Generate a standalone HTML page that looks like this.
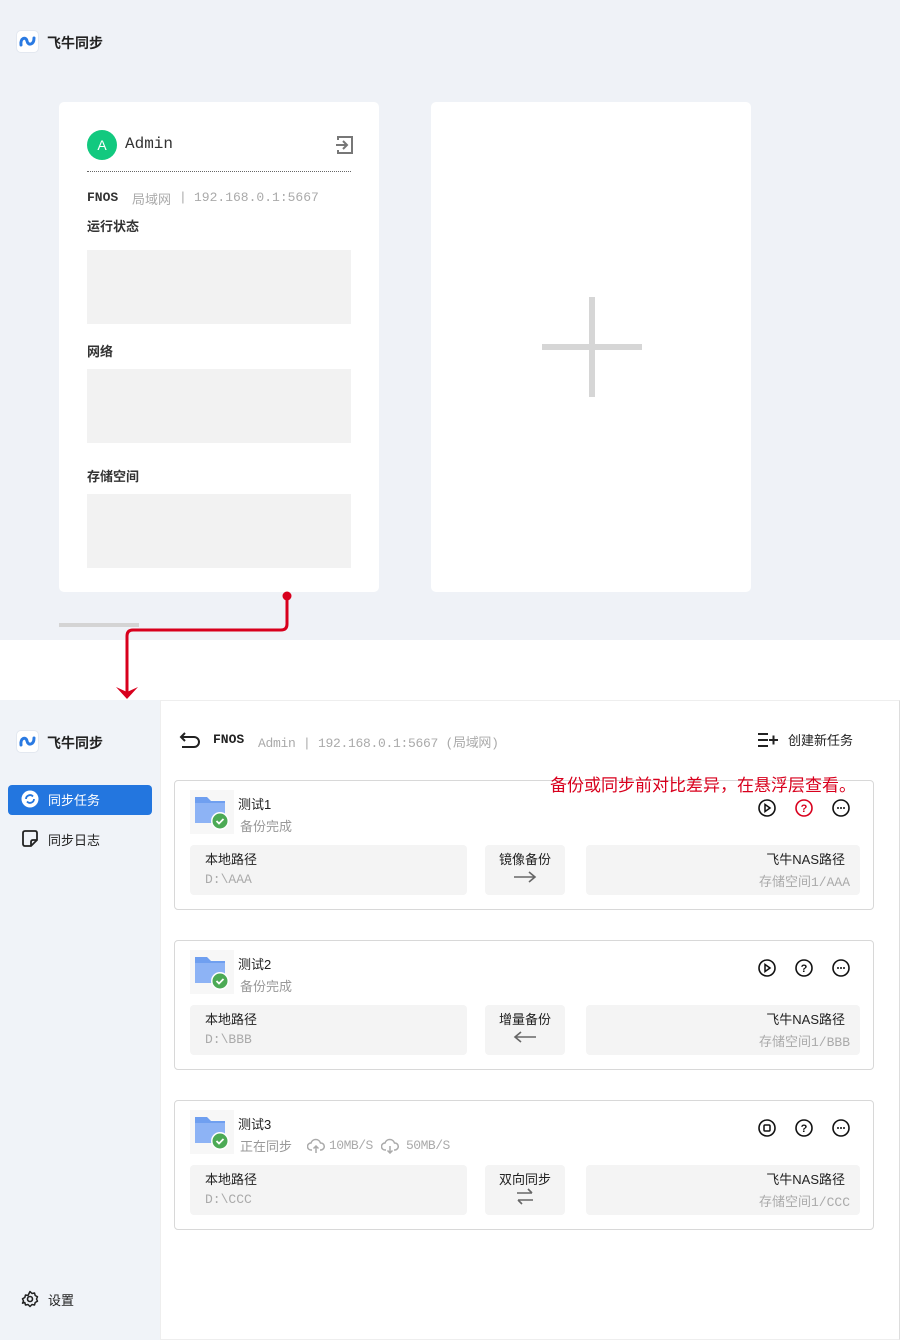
<!DOCTYPE html>
<html><head><meta charset="utf-8"><style>
*{margin:0;padding:0;box-sizing:border-box}
body{width:900px;height:1340px;position:relative;background:#fff;font-family:"Liberation Sans","Noto Sans CJK SC",sans-serif;color:#222;overflow:hidden}
.a{position:absolute}
.mono{font-family:"Liberation Mono","Noto Sans CJK SC",monospace}
.gbox{background:#f2f2f2;position:absolute;left:87px;width:264px;height:74px}
.lbl{position:absolute;left:87px;font-size:13px;font-weight:bold;color:#333}
.card{position:absolute;left:174px;width:700px;height:130px;border:1px solid #d8d8d8;border-radius:4px;background:#fff}
.box{position:absolute;top:64px;height:50px;background:#f4f4f4;border-radius:4px;font-size:13px}
.ic{position:absolute;top:18px}
</style></head><body>
<div class="a" style="left:0;top:0;width:900px;height:640px;background:#eff2f7"></div>
<div class="a" style="left:16px;top:30px;width:23px;height:23px;background:#fff;border-radius:5px;border:1px solid #e3e8f0"></div>
<svg class="a" style="left:18px;top:33px" width="19" height="17" viewBox="0 0 19 17"><path d="M3 12 C2 5,8 3,9 8 C10 13,16 12,16 5" fill="none" stroke="#2a7ae2" stroke-width="3" stroke-linecap="round"/></svg>
<div class="a" style="left:47px;top:33px;font-size:14px;font-weight:bold">飞牛同步</div>
<div class="a" style="left:59px;top:102px;width:320px;height:490px;background:#fff;border-radius:5px"></div>
<div class="a" style="left:87px;top:130px;width:30px;height:30px;border-radius:50%;background:#12c97f;color:#fff;font-size:14px;text-align:center;line-height:30px">A</div>
<div class="a mono" style="left:125px;top:135px;font-size:16px;color:#333">Admin</div>
<svg class="a" style="left:335px;top:134px" width="20" height="22" viewBox="0 0 20 22"><path d="M3 6V3h14v16H3v-3M1 11h10M8 7l4 4-4 4" fill="none" stroke="#777" stroke-width="2"/></svg>
<div class="a" style="left:87px;top:171px;width:264px;border-top:1px dotted #666"></div>
<div class="a mono" style="left:87px;top:190px;font-size:13px;font-weight:bold;color:#333">FNOS</div>
<div class="a" style="left:132px;top:189px;font-size:13px;color:#aaa">局域网</div>
<div class="a mono" style="left:179px;top:190px;font-size:13px;color:#aaa">|</div>
<div class="a mono" style="left:194px;top:190px;font-size:13px;color:#aaa">192.168.0.1:5667</div>
<div class="lbl" style="top:216px">运行状态</div>
<div class="gbox" style="top:250px"></div>
<div class="lbl" style="top:341px">网络</div>
<div class="gbox" style="top:369px"></div>
<div class="lbl" style="top:466px">存储空间</div>
<div class="gbox" style="top:494px"></div>
<div class="a" style="left:59px;top:623px;width:80px;height:4px;background:#d4d4d4"></div>
<div class="a" style="left:431px;top:102px;width:320px;height:490px;background:#fff;border-radius:5px"></div>
<div class="a" style="left:589px;top:297px;width:6px;height:100px;background:#d6d6d6"></div>
<div class="a" style="left:542px;top:344px;width:100px;height:6px;background:#d6d6d6"></div>
<svg class="a" style="left:0;top:580px" width="320" height="125" viewBox="0 580 320 125"><circle cx="287" cy="596" r="4.5" fill="#d8001d"/><path d="M287 596V624q0 6-6 6H133q-6 0-6 6V695" fill="none" stroke="#d8001d" stroke-width="3"/><path d="M116 687l11 12 11-12-11 5z" fill="#d8001d"/></svg>
<div class="a" style="left:0;top:700px;width:160px;height:640px;background:#f0f3f8"></div>
<div class="a" style="left:160px;top:700px;width:740px;height:640px;border:1px solid #eee;border-right:1px solid #ddd"></div>
<div class="a" style="left:16px;top:730px;width:23px;height:23px;background:#fff;border-radius:5px;border:1px solid #e3e8f0"></div>
<svg class="a" style="left:18px;top:733px" width="19" height="17" viewBox="0 0 19 17"><path d="M3 12 C2 5,8 3,9 8 C10 13,16 12,16 5" fill="none" stroke="#2a7ae2" stroke-width="3" stroke-linecap="round"/></svg>
<div class="a" style="left:47px;top:733px;font-size:14px;font-weight:bold">飞牛同步</div>
<div class="a" style="left:8px;top:785px;width:144px;height:30px;background:#2376df;border-radius:4px"></div>
<svg class="a" style="left:21px;top:790px" width="18" height="18" viewBox="0 0 18 18"><circle cx="9" cy="9" r="8.5" fill="#fff"/><path d="M5 9a4 4 0 0 1 7-2.5M13 9a4 4 0 0 1-7 2.5" fill="none" stroke="#2376df" stroke-width="1.8"/></svg>
<div class="a" style="left:48px;top:790px;font-size:13px;color:#fff">同步任务</div>
<svg class="a" style="left:21px;top:830px" width="18" height="18" viewBox="0 0 18 18"><path d="M2 3q0-2 2-2h10q2 0 2 2v7l-6 6H4q-2 0-2-2z M16 10h-4q-2 0-2 2v4" fill="none" stroke="#222" stroke-width="1.8"/></svg>
<div class="a" style="left:48px;top:830px;font-size:13px">同步日志</div>
<svg class="a" style="left:21px;top:1290px" width="18" height="18" viewBox="0 0 18 18"><circle cx="9" cy="9" r="2.5" fill="none" stroke="#222" stroke-width="1.6"/><path d="M9 1.5l2 2 2.5-.5.7 2.5 2.3 1.3-1 2.2 1 2.2-2.3 1.3-.7 2.5-2.5-.5-2 2-2-2-2.5.5-.7-2.5L1.5 13.2l1-2.2-1-2.2 2.3-1.3.7-2.5 2.5.5z" fill="none" stroke="#222" stroke-width="1.5" stroke-linejoin="round"/></svg>
<div class="a" style="left:48px;top:1290px;font-size:13px">设置</div>
<svg class="a" style="left:179px;top:732px" width="22" height="16" viewBox="0 0 22 16"><path d="M6 1L2 5l4 4M2 5h13a5 5 0 0 1 0 10H3" fill="none" stroke="#222" stroke-width="2"/></svg>
<div class="a mono" style="left:213px;top:732px;font-size:13px;font-weight:bold">FNOS</div>
<div class="a mono" style="left:258px;top:732px;font-size:13px;color:#aaa;letter-spacing:-0.3px">Admin | 192.168.0.1:5667 (局域网)</div>
<svg class="a" style="left:757px;top:733px" width="22" height="14" viewBox="0 0 22 14"><path d="M1 1h10M1 7h10M1 13h10M12 7h9M16.5 2.5v9" stroke="#222" stroke-width="2"/></svg>
<div class="a" style="left:788px;top:730px;font-size:13px">创建新任务</div>

<div class="card" style="top:780px"></div>
<div class="card" style="top:940px"></div>
<div class="card" style="top:1100px"></div>

<div class="a" style="left:550px;top:771px;font-size:17px;color:#d8001d">备份或同步前对比差异，在悬浮层查看。</div>

<div class="a" style="left:174px;top:780px;width:700px;height:130px">
 <div class="a" style="left:16px;top:10px;width:44px;height:44px;background:#f7f7f7"></div>
 <svg class="a" style="left:20px;top:14px" width="40" height="38" viewBox="0 0 40 38"><path d="M1 3h12l4 4h14v22H1z" fill="#6f9ff0"/><path d="M1 9h30v20H1z" fill="#8db3f5"/><circle cx="26" cy="27" r="9" fill="#fff"/><circle cx="26" cy="27" r="7.5" fill="#4caa55"/><path d="M22.5 27l2.5 2.5 4.5-4.5" fill="none" stroke="#fff" stroke-width="1.8"/></svg>
 <div class="a" style="left:64px;top:14px;font-size:13px">测试1</div>
 <div class="a" style="left:66px;top:36px;font-size:13px;color:#999">备份完成</div>
 <svg class="ic" style="left:584px;top:19px" width="18" height="18" viewBox="0 0 18 18"><circle cx="9" cy="9" r="8" fill="none" stroke="#111" stroke-width="1.6"/><path d="M7 5.5v7l5-3.5z" fill="none" stroke="#111" stroke-width="1.5"/></svg>
 <svg class="ic" style="left:621px;top:19px" width="18" height="18" viewBox="0 0 18 18"><circle cx="9" cy="9" r="8" fill="none" stroke="#d8001d" stroke-width="1.6"/><text x="9" y="13" font-size="11" font-weight="bold" text-anchor="middle" fill="#d8001d" font-family="Liberation Sans">?</text></svg>
 <svg class="ic" style="left:658px;top:19px" width="18" height="18" viewBox="0 0 18 18"><circle cx="9" cy="9" r="8" fill="none" stroke="#111" stroke-width="1.6"/><circle cx="6" cy="9" r="1" fill="#111"/><circle cx="9" cy="9" r="1" fill="#111"/><circle cx="12" cy="9" r="1" fill="#111"/></svg>
 <div class="box" style="left:16px;top:65px;width:277px"><div class="a" style="left:15px;top:4px">本地路径</div><div class="a mono" style="left:15px;top:27px;color:#aaa">D:\AAA</div></div>
 <div class="box" style="left:311px;top:65px;width:80px;text-align:center"><div style="margin-top:4px">镜像备份</div><svg width="24" height="18" viewBox="0 0 24 18"><path d="M1 9h21M16 4l6 5-6 5" fill="none" stroke="#666" stroke-width="1.6"/></svg></div>
 <div class="box" style="left:412px;top:65px;width:274px;text-align:right;padding-right:15px"><div style="margin-top:4px">飞牛NAS路径</div><div class="mono" style="color:#aaa;margin-top:3px;margin-right:-5px">存储空间1/AAA</div></div>
</div>

<div class="a" style="left:174px;top:940px;width:700px;height:130px">
 <div class="a" style="left:16px;top:10px;width:44px;height:44px;background:#f7f7f7"></div>
 <svg class="a" style="left:20px;top:14px" width="40" height="38" viewBox="0 0 40 38"><path d="M1 3h12l4 4h14v22H1z" fill="#6f9ff0"/><path d="M1 9h30v20H1z" fill="#8db3f5"/><circle cx="26" cy="27" r="9" fill="#fff"/><circle cx="26" cy="27" r="7.5" fill="#4caa55"/><path d="M22.5 27l2.5 2.5 4.5-4.5" fill="none" stroke="#fff" stroke-width="1.8"/></svg>
 <div class="a" style="left:64px;top:14px;font-size:13px">测试2</div>
 <div class="a" style="left:66px;top:36px;font-size:13px;color:#999">备份完成</div>
 <svg class="ic" style="left:584px;top:19px" width="18" height="18" viewBox="0 0 18 18"><circle cx="9" cy="9" r="8" fill="none" stroke="#111" stroke-width="1.6"/><path d="M7 5.5v7l5-3.5z" fill="none" stroke="#111" stroke-width="1.5"/></svg>
 <svg class="ic" style="left:621px;top:19px" width="18" height="18" viewBox="0 0 18 18"><circle cx="9" cy="9" r="8" fill="none" stroke="#111" stroke-width="1.6"/><text x="9" y="13" font-size="11" font-weight="bold" text-anchor="middle" fill="#111" font-family="Liberation Sans">?</text></svg>
 <svg class="ic" style="left:658px;top:19px" width="18" height="18" viewBox="0 0 18 18"><circle cx="9" cy="9" r="8" fill="none" stroke="#111" stroke-width="1.6"/><circle cx="6" cy="9" r="1" fill="#111"/><circle cx="9" cy="9" r="1" fill="#111"/><circle cx="12" cy="9" r="1" fill="#111"/></svg>
 <div class="box" style="left:16px;top:65px;width:277px"><div class="a" style="left:15px;top:4px">本地路径</div><div class="a mono" style="left:15px;top:27px;color:#aaa">D:\BBB</div></div>
 <div class="box" style="left:311px;top:65px;width:80px;text-align:center"><div style="margin-top:4px">增量备份</div><svg width="24" height="18" viewBox="0 0 24 18"><path d="M23 9H2M8 4L2 9l6 5" fill="none" stroke="#666" stroke-width="1.6"/></svg></div>
 <div class="box" style="left:412px;top:65px;width:274px;text-align:right;padding-right:15px"><div style="margin-top:4px">飞牛NAS路径</div><div class="mono" style="color:#aaa;margin-top:3px;margin-right:-5px">存储空间1/BBB</div></div>
</div>

<div class="a" style="left:174px;top:1100px;width:700px;height:130px">
 <div class="a" style="left:16px;top:10px;width:44px;height:44px;background:#f7f7f7"></div>
 <svg class="a" style="left:20px;top:14px" width="40" height="38" viewBox="0 0 40 38"><path d="M1 3h12l4 4h14v22H1z" fill="#6f9ff0"/><path d="M1 9h30v20H1z" fill="#8db3f5"/><circle cx="26" cy="27" r="9" fill="#fff"/><circle cx="26" cy="27" r="7.5" fill="#4caa55"/><path d="M22.5 27l2.5 2.5 4.5-4.5" fill="none" stroke="#fff" stroke-width="1.8"/></svg>
 <div class="a" style="left:64px;top:14px;font-size:13px">测试3</div>
 <div class="a" style="left:66px;top:36px;font-size:13px;color:#999">正在同步</div>
 <svg class="a" style="left:133px;top:38px" width="18" height="16" viewBox="0 0 18 16"><path d="M5 12H4a3.5 3.5 0 0 1 0-7 5 5 0 0 1 9.5 0A3.5 3.5 0 0 1 14 12h-1M9 15V8M6.5 10.5L9 8l2.5 2.5" fill="none" stroke="#aaa" stroke-width="1.5"/></svg>
 <div class="a mono" style="left:155px;top:38px;font-size:13px;color:#aaa;letter-spacing:-0.5px">10MB/S</div>
 <svg class="a" style="left:207px;top:38px" width="18" height="16" viewBox="0 0 18 16"><path d="M5 12H4a3.5 3.5 0 0 1 0-7 5 5 0 0 1 9.5 0A3.5 3.5 0 0 1 14 12h-1M9 8v7M6.5 12.5L9 15l2.5-2.5" fill="none" stroke="#aaa" stroke-width="1.5"/></svg>
 <div class="a mono" style="left:232px;top:38px;font-size:13px;color:#aaa;letter-spacing:-0.5px">50MB/S</div>
 <svg class="ic" style="left:584px;top:19px" width="18" height="18" viewBox="0 0 18 18"><circle cx="9" cy="9" r="8" fill="none" stroke="#111" stroke-width="1.6"/><rect x="6" y="6" width="6" height="6" rx="1" fill="none" stroke="#111" stroke-width="1.5"/></svg>
 <svg class="ic" style="left:621px;top:19px" width="18" height="18" viewBox="0 0 18 18"><circle cx="9" cy="9" r="8" fill="none" stroke="#111" stroke-width="1.6"/><text x="9" y="13" font-size="11" font-weight="bold" text-anchor="middle" fill="#111" font-family="Liberation Sans">?</text></svg>
 <svg class="ic" style="left:658px;top:19px" width="18" height="18" viewBox="0 0 18 18"><circle cx="9" cy="9" r="8" fill="none" stroke="#111" stroke-width="1.6"/><circle cx="6" cy="9" r="1" fill="#111"/><circle cx="9" cy="9" r="1" fill="#111"/><circle cx="12" cy="9" r="1" fill="#111"/></svg>
 <div class="box" style="left:16px;top:65px;width:277px"><div class="a" style="left:15px;top:4px">本地路径</div><div class="a mono" style="left:15px;top:27px;color:#aaa">D:\CCC</div></div>
 <div class="box" style="left:311px;top:65px;width:80px;text-align:center"><div style="margin-top:4px">双向同步</div><svg width="20" height="18" viewBox="0 0 20 18"><path d="M2 5h15M13 1l4 4M18 12H3M7 16l-4-4" fill="none" stroke="#666" stroke-width="1.6"/></svg></div>
 <div class="box" style="left:412px;top:65px;width:274px;text-align:right;padding-right:15px"><div style="margin-top:4px">飞牛NAS路径</div><div class="mono" style="color:#aaa;margin-top:3px;margin-right:-5px">存储空间1/CCC</div></div>
</div>
</body></html>
